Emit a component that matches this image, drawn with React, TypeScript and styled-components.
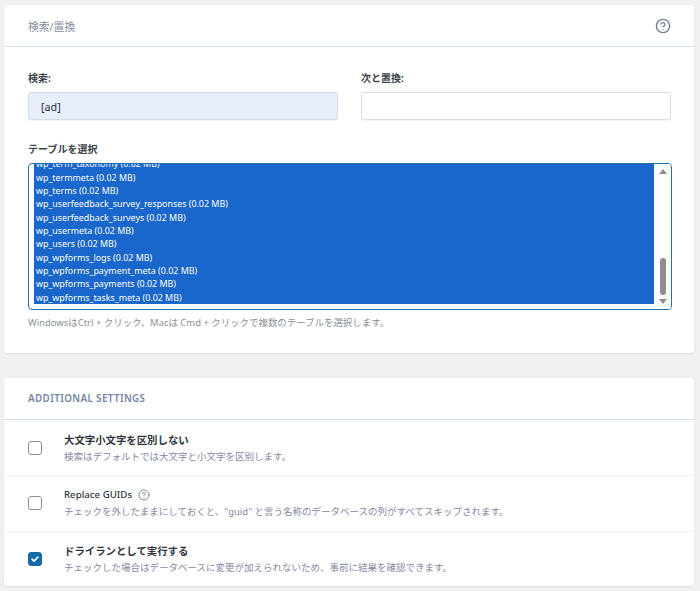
import React from "react";
import styled, { createGlobalStyle } from "styled-components";

const GlobalStyle = createGlobalStyle`
  html, body {
    margin: 0;
    padding: 0;
    background: #f0f0f1;
  }
  body {
    font-family: "Noto Sans", "Noto Sans CJK JP", sans-serif;
    color: #3c434a;
  }
  * {
    box-sizing: border-box;
  }
`;

/* テーブル一覧（末尾までスクロールされた状態） */
const tables = [
  "wp_actionscheduler_actions (0.02 MB)",
  "wp_actionscheduler_claims (0.02 MB)",
  "wp_actionscheduler_groups (0.02 MB)",
  "wp_actionscheduler_logs (0.02 MB)",
  "wp_commentmeta (0.02 MB)",
  "wp_comments (0.02 MB)",
  "wp_links (0.02 MB)",
  "wp_options (0.45 MB)",
  "wp_postmeta (0.14 MB)",
  "wp_posts (0.11 MB)",
  "wp_term_relationships (0.02 MB)",
  "wp_term_taxonomy (0.02 MB)",
  "wp_termmeta (0.02 MB)",
  "wp_terms (0.02 MB)",
  "wp_userfeedback_survey_responses (0.02 MB)",
  "wp_userfeedback_surveys (0.02 MB)",
  "wp_usermeta (0.02 MB)",
  "wp_users (0.02 MB)",
  "wp_wpforms_logs (0.02 MB)",
  "wp_wpforms_payment_meta (0.02 MB)",
  "wp_wpforms_payments (0.02 MB)",
  "wp_wpforms_tasks_meta (0.02 MB)",
];

const settings = [
  {
    title: "大文字小文字を区別しない",
    desc: "検索はデフォルトでは大文字と小文字を区別します。",
    checked: false,
    bold: true,
    help: false,
  },
  {
    title: "Replace GUIDs",
    desc: "チェックを外したままにしておくと、\"guid\" と言う名称のデータベースの列がすべてスキップされます。",
    checked: false,
    bold: false,
    help: true,
  },
  {
    title: "ドライランとして実行する",
    desc: "チェックした場合はデータベースに変更が加えられないため、事前に結果を確認できます。",
    checked: true,
    bold: true,
    help: false,
  },
];

function HelpIcon({ size }: { size: number }) {
  return (
    <svg width={size} height={size} viewBox="0 0 24 24" fill="none" stroke="currentColor" strokeWidth={2} strokeLinecap="round" strokeLinejoin="round">
      <circle cx="12" cy="12" r="10" />
      <path d="M9.09 9a3 3 0 0 1 5.83 1c0 2-3 3-3 3" />
      <path d="M12 17h.01" />
    </svg>
  );
}

export default function App() {
  return (
    <>
      <GlobalStyle />
      <Page>
        <Card>
          <CardHeader>
            <HeaderTitle>検索/置換</HeaderTitle>
            <HeaderHelp>
              <HelpIcon size={16} />
            </HeaderHelp>
          </CardHeader>
          <CardBody>
            <Fields>
              <Field>
                <Label>検索:</Label>
                <Input $filled>[ad]</Input>
              </Field>
              <Field>
                <Label>次と置換:</Label>
                <Input />
              </Field>
            </Fields>

            <Field>
              <Label>テーブルを選択</Label>
              <SelectBox>
                <OptionList>
                  {tables.map((t) => (
                    <OptionRow key={t}>{t}</OptionRow>
                  ))}
                </OptionList>
                <ScrollBar>
                  <Arrow $dir="up" />
                  <Track>
                    <Thumb />
                  </Track>
                  <Arrow $dir="down" />
                </ScrollBar>
              </SelectBox>
              <Hint>WindowsはCtrl + クリック、Macは Cmd + クリックで複数のテーブルを選択します。</Hint>
            </Field>
          </CardBody>
        </Card>

        <Card>
          <CardHeader>
            <SectionTitle>Additional Settings</SectionTitle>
          </CardHeader>
          {settings.map((s) => (
            <SettingRow key={s.title}>
              <Checkbox $checked={s.checked}>
                {s.checked && (
                  <svg width="10" height="10" viewBox="0 0 24 24" fill="none" stroke="#fff" strokeWidth={4} strokeLinecap="round" strokeLinejoin="round">
                    <path d="M5 12.5l4.5 4.5L19 7.5" />
                  </svg>
                )}
              </Checkbox>
              <SettingText>
                <SettingTitle $bold={s.bold}>
                  {s.title}
                  {s.help && (
                    <InlineHelp>
                      <HelpIcon size={12} />
                    </InlineHelp>
                  )}
                </SettingTitle>
                <SettingDesc>{s.desc}</SettingDesc>
              </SettingText>
            </SettingRow>
          ))}
        </Card>
      </Page>
    </>
  );
}

const Page = styled.div`
  padding: 5px 6px 6px 4px;
  display: flex;
  flex-direction: column;
  gap: 25px;
`;

const Card = styled.section`
  background: #fff;
  border-radius: 4px;
  box-shadow: 0 1px 2px rgba(0, 0, 0, 0.08);
`;

const CardHeader = styled.header`
  height: 42px;
  padding: 0 22px 0 24px;
  display: flex;
  align-items: center;
  justify-content: space-between;
  border-bottom: 1px solid #d6e1f0;
`;

const HeaderTitle = styled.h2`
  margin: 0;
  font-size: 10.8px;
  font-weight: 400;
  color: #8590a3;
`;

const HeaderHelp = styled.span`
  display: flex;
  color: #6f7f99;
  margin-right: 1px;
`;

const SectionTitle = styled.h2`
  margin: 0;
  font-size: 9.8px;
  font-weight: 600;
  letter-spacing: 0.4px;
  text-transform: uppercase;
  color: #7486a3;
`;

const CardBody = styled.div`
  padding: 24px 22px 23px 24px;
  display: flex;
  flex-direction: column;
  gap: 22px;
`;

const Fields = styled.div`
  display: grid;
  grid-template-columns: 310px 310px;
  column-gap: 23px;
`;

const Field = styled.div`
  display: flex;
  flex-direction: column;
`;

const Label = styled.label`
  font-size: 10px;
  line-height: 14px;
  font-weight: 700;
  color: #3c434a;
  margin-bottom: 7px;
`;

const Input = styled.div<{ $filled?: boolean }>`
  height: 28px;
  padding: 0 12px;
  display: flex;
  align-items: center;
  font-size: 10.8px;
  color: #2c3338;
  background: ${(p) => (p.$filled ? "#e8eefb" : "#fff")};
  border: 1px solid #d5dde9;
  border-radius: 3px;
  box-shadow: 0 1px 1px rgba(30, 50, 90, 0.06);
`;

const SelectBox = styled.div`
  height: 147px;
  display: flex;
  border: 1px solid #2271b1;
  border-radius: 4px;
  overflow: hidden;
`;

/* 末尾に揃えて上側をはみ出させる */
const OptionList = styled.div`
  flex: 1;
  display: flex;
  flex-direction: column;
  justify-content: flex-end;
  overflow: hidden;
  padding: 0 0 5px 5px;
`;

const OptionRow = styled.div`
  flex-shrink: 0;
  height: 13.33px;
  line-height: 13.33px;
  padding-left: 2px;
  font-family: "Noto Sans", sans-serif;
  font-size: 8.9px;
  color: #fff;
  background: #1966cc;
  white-space: nowrap;
`;

const ScrollBar = styled.div`
  width: 17px;
  display: flex;
  flex-direction: column;
  align-items: center;
  background: #fdfdfd;
  padding: 3px 0;
`;

const Arrow = styled.div<{ $dir: "up" | "down" }>`
  width: 0;
  height: 0;
  margin: 2px 0;
  border-left: 4px solid transparent;
  border-right: 4px solid transparent;
  ${(p) =>
    p.$dir === "up"
      ? "border-bottom: 5px solid #8e8e8e;"
      : "border-top: 5px solid #8e8e8e;"}
`;

const Track = styled.div`
  flex: 1;
  display: flex;
  flex-direction: column;
  justify-content: flex-end;
  padding: 4px 0 2px;
`;

const Thumb = styled.div`
  width: 6px;
  height: 37px;
  border-radius: 3px;
  background: #8f8f8f;
`;

const Hint = styled.p`
  margin: 6px 0 0;
  font-size: 9.45px;
  line-height: 14px;
  color: #8a8e96;
`;

const SettingRow = styled.div`
  height: 55.3px;
  padding: 0 24px;
  display: flex;
  align-items: center;
  gap: 22px;

  & + & {
    border-top: 1px solid #edf1f6;
  }
`;

const Checkbox = styled.span<{ $checked: boolean }>`
  flex-shrink: 0;
  width: 14px;
  height: 14px;
  display: flex;
  align-items: center;
  justify-content: center;
  border-radius: 3px;
  border: 1px solid ${(p) => (p.$checked ? "#156aa6" : "#8c8f94")};
  background: ${(p) => (p.$checked ? "#156aa6" : "#fff")};
`;

const SettingText = styled.div`
  display: flex;
  flex-direction: column;
  gap: 3px;
`;

const SettingTitle = styled.div<{ $bold: boolean }>`
  display: flex;
  align-items: center;
  gap: 6px;
  font-size: ${(p) => (p.$bold ? "10.4px" : "9.7px")};
  line-height: 14px;
  font-weight: ${(p) => (p.$bold ? 700 : 500)};
  color: #2f3540;
`;

const InlineHelp = styled.span`
  display: flex;
  color: #7d8ba3;
`;

const SettingDesc = styled.div`
  font-size: 9.5px;
  line-height: 13px;
  color: #8787a3;
`;
